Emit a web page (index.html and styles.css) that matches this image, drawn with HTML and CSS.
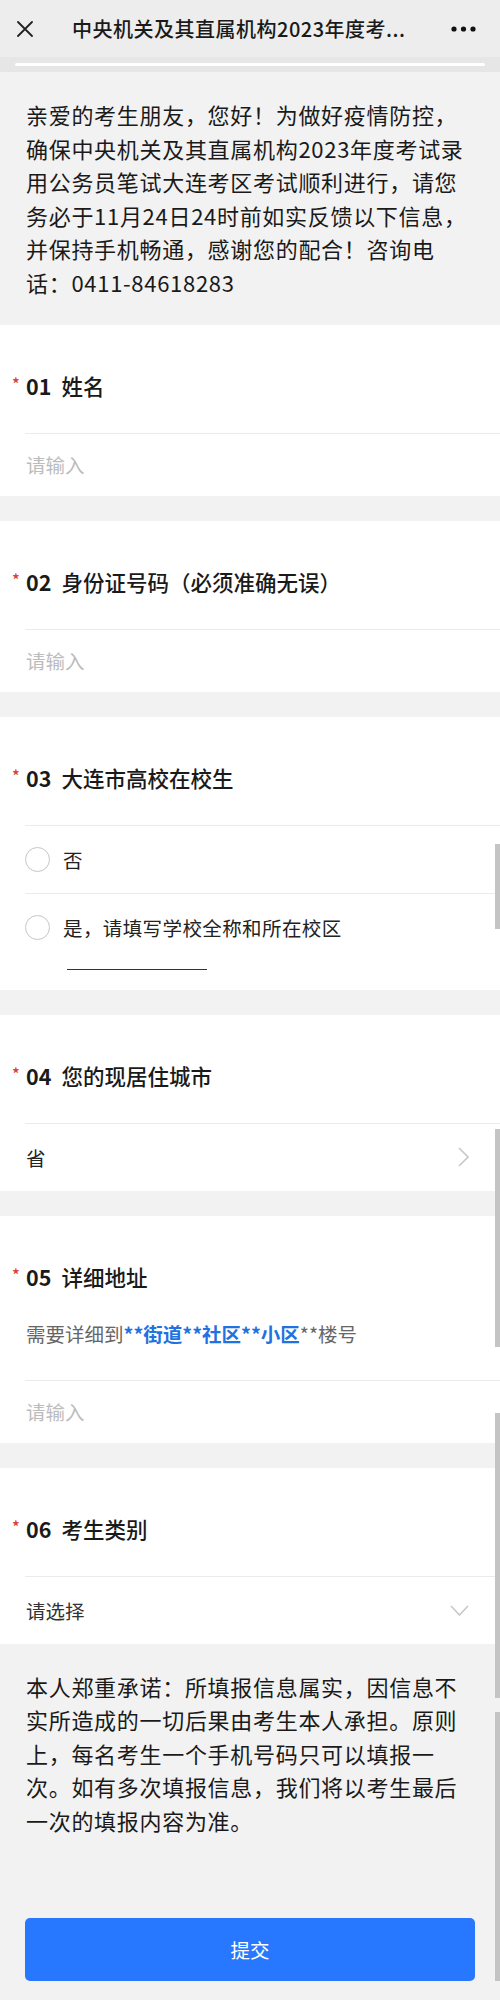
FILE: index.html
```html
<!DOCTYPE html>
<html lang="zh-CN">
<head>
<meta charset="UTF-8">
<title>考生信息反馈</title>
<link rel="stylesheet" href="styles.css">
</head>
<body>
    <div class="topbar">
        <svg class="close-icon" width="16" height="16" viewBox="0 0 16 16">
            <path d="M1 1L15 15M15 1L1 15" stroke="#222" stroke-width="1.8" stroke-linecap="round"/>
        </svg>
        <div class="topbar-title">中央机关及其直属机构2023年度考...</div>
        <svg class="more-icon" width="26" height="6" viewBox="0 0 26 6">
            <circle cx="3" cy="3" r="2.6" fill="#111"/>
            <circle cx="12.5" cy="3" r="2.6" fill="#111"/>
            <circle cx="22" cy="3" r="2.6" fill="#111"/>
        </svg>
    </div>
    <div class="progress"><div class="progress-line"></div></div>

    <div class="intro">
        亲爱的考生朋友，您好！为做好疫情防控，<br>
        确保中央机关及其直属机构2023年度考试录<br>
        用公务员笔试大连考区考试顺利进行，请您<br>
        务必于11月24日24时前如实反馈以下信息，<br>
        并保持手机畅通，感谢您的配合！咨询电<br>
        话：0411-84618283
    </div>

    <div class="card">
        <div class="q-title"><span class="star">*</span><span class="num">01</span>姓名</div>
        <div class="q-row"><span class="placeholder">请输入</span></div>
    </div>

    <div class="card">
        <div class="q-title"><span class="star">*</span><span class="num">02</span>身份证号码（必须准确无误）</div>
        <div class="q-row"><span class="placeholder">请输入</span></div>
    </div>

    <div class="card">
        <div class="q-title"><span class="star">*</span><span class="num">03</span>大连市高校在校生</div>
        <div class="option">
            <div class="option-main"><span class="radio"></span>否</div>
        </div>
        <div class="option with-input">
            <div class="option-main"><span class="radio"></span>是，请填写学校全称和所在校区</div>
            <div class="option-input"></div>
        </div>
    </div>

    <div class="card">
        <div class="q-title"><span class="star">*</span><span class="num">04</span>您的现居住城市</div>
        <div class="q-select">
            <span class="select-value">省</span>
            <svg width="11" height="20" viewBox="0 0 11 20">
                <polyline points="1,1 10,10 1,19" fill="none" stroke="#c8c8c8" stroke-width="1.6"/>
            </svg>
        </div>
    </div>

    <div class="card">
        <div class="q-title has-desc"><span class="star">*</span><span class="num">05</span>详细地址</div>
        <div class="q-desc">需要详细到<b class="hl">**街道**社区**小区</b>**楼号</div>
        <div class="q-row"><span class="placeholder">请输入</span></div>
    </div>

    <div class="card last">
        <div class="q-title"><span class="star">*</span><span class="num">06</span>考生类别</div>
        <div class="q-select">
            <span class="select-value dim">请选择</span>
            <svg width="19" height="11" viewBox="0 0 19 11">
                <polyline points="1,1 9.5,10 18,1" fill="none" stroke="#c8c8c8" stroke-width="1.6"/>
            </svg>
        </div>
    </div>

    <div class="promise">
        本人郑重承诺：所填报信息属实，因信息不<br>
        实所造成的一切后果由考生本人承担。原则<br>
        上，每名考生一个手机号码只可以填报一<br>
        次。如有多次填报信息，我们将以考生最后<br>
        一次的填报内容为准。
    </div>

    <button class="submit">提交</button>

    <div class="scroll-thumb" style="top: 844px; height: 85px;"></div>
    <div class="scroll-thumb" style="top: 1129px; height: 218px;"></div>
    <div class="scroll-thumb" style="top: 1413px; height: 285px;"></div>
    <div class="scroll-thumb" style="top: 1712px; height: 288px;"></div>
</body>
</html>
```

FILE: styles.css
```css
body {
    margin: 0;
    width: 500px;
    position: relative;
    background-color: #f2f2f2;
    font-family: "Noto Sans CJK SC", sans-serif;
    color: #1a1a1a;
}

.topbar {
    height: 57px;
    background-color: #ededed;
    display: flex;
    align-items: center;
}

.close-icon {
    margin-left: 17px;
    flex-shrink: 0;
}

.topbar-title {
    flex: 1;
    margin-left: 39px;
    font-size: 20px;
    font-weight: 500;
    letter-spacing: 0.5px;
    white-space: nowrap;
    overflow: hidden;
}

.more-icon {
    margin-right: 23px;
    flex-shrink: 0;
}

.progress {
    height: 15px;
    padding-top: 6px;
    box-sizing: border-box;
    background-color: #e6e6e6;
}

.progress-line {
    margin: 0 15px;
    height: 3px;
    background-color: #fff;
    border-radius: 2px;
}

.intro,
.promise {
    padding: 26px 10px 25px 26px;
    font-size: 22px;
    letter-spacing: 0.7px;
    line-height: 33.6px;
}

.card {
    background-color: #fff;
    padding-top: 45px;
    margin-bottom: 25px;
}

.card.last {
    margin-bottom: 0;
}

.q-title {
    display: flex;
    align-items: center;
    height: 32px;
    padding-left: 12px;
    margin-bottom: 31px;
    font-size: 21.5px;
    font-weight: 500;
}

.q-title.has-desc {
    margin-bottom: 25px;
}

.star {
    width: 14px;
    color: #d9403a;
    font-size: 16px;
    line-height: 16px;
    margin-top: -6px;
}

.num {
    font-weight: 700;
    margin-right: 10px;
}

.q-desc {
    padding-left: 26px;
    margin-bottom: 30px;
    line-height: 32px;
    font-size: 19.5px;
    color: #666;
}

.hl {
    color: #1f72e0;
    font-weight: 700;
}

.q-row {
    margin-left: 25px;
    padding-left: 1px;
    height: 62px;
    border-top: 1px solid #ebebeb;
    display: flex;
    align-items: center;
}

.placeholder {
    font-size: 19.5px;
    color: #bcbcbc;
}

.option {
    margin-left: 25px;
    border-top: 1px solid #ebebeb;
}

.option.with-input {
    padding-bottom: 20px;
}

.option-main {
    height: 67px;
    display: flex;
    align-items: center;
    font-size: 19.5px;
    letter-spacing: 0.4px;
    color: #222;
}

.radio {
    width: 23px;
    height: 23px;
    border: 1px solid #c6c6c6;
    border-radius: 50%;
    margin-right: 13px;
    flex-shrink: 0;
}

.option-input {
    margin-left: 42px;
    width: 140px;
    height: 8px;
    border-bottom: 1px solid #333;
}

.q-select {
    margin-left: 25px;
    padding: 0 31px 0 1px;
    height: 67px;
    border-top: 1px solid #ebebeb;
    display: flex;
    align-items: center;
    justify-content: space-between;
}

.select-value {
    font-size: 19.5px;
    color: #222;
}

.select-value.dim {
    color: #333;
}

.promise {
    padding-bottom: 0;
}

.submit {
    display: block;
    margin: 80px 25px 0;
    width: 450px;
    height: 63px;
    border: none;
    border-radius: 5px;
    background-color: #2878ff;
    color: #fff;
    font-family: "Noto Sans CJK SC", sans-serif;
    font-size: 19.5px;
    cursor: pointer;
}

.scroll-thumb {
    position: absolute;
    right: 0;
    width: 5px;
    background-color: #c4c4c4;
}
```
